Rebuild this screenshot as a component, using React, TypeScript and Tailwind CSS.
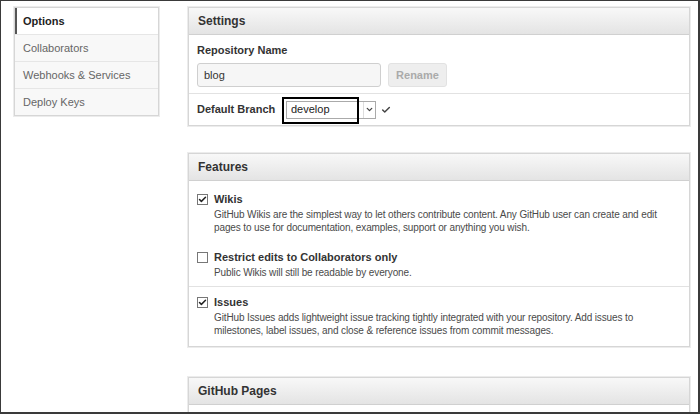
import { Check, ChevronDown } from 'lucide-react';

const navItems = ['Options', 'Collaborators', 'Webhooks & Services', 'Deploy Keys'];

function Panel({ title, children, className }: { title: string; children?: React.ReactNode; className?: string }) {
    return (
        <div className={'border border-[#d6d6d6] shadow-[0_0_0_1px_#ececec] bg-white ' + (className ?? '')}>
            <div className="h-[27px] flex items-center px-[9px] bg-gradient-to-b from-[#f8f8f8] to-[#e4e4e4] border-b border-[#d0d0d0] text-[12px] font-bold text-[#333]">
                {title}
            </div>
            {children}
        </div>
    );
}

function Box({ checked }: { checked?: boolean }) {
    return (
        <span className="w-[11px] h-[11px] border border-[#777] bg-white flex items-center justify-center shrink-0">
            {checked && <Check className="w-[9px] h-[9px] text-[#222]" strokeWidth={4} />}
        </span>
    );
}

function Feature({ title, checked, lines }: { title: string; checked?: boolean; lines: string[] }) {
    return (
        <div>
            <div className="flex items-center gap-[6px] h-[13px]">
                <Box checked={checked} />
                <span className="text-[11px] font-bold text-[#333]">{title}</span>
            </div>
            <div className="pl-[17px] mt-[2px] text-[10px] leading-[13px] tracking-[-0.12px] text-[#4a4a4a] whitespace-nowrap">
                {lines.map(l => <div key={l}>{l}</div>)}
            </div>
        </div>
    );
}

export default function App() {
    return (
        <div className="w-[700px] h-[414px] overflow-hidden bg-white border-l border-t border-r-2 border-b-2 border-[#3a3a3a] font-['Liberation_Sans',Arial,sans-serif]">
            <div className="flex pt-[6px] pl-[13px] gap-[29px]">
                {/* Sidebar */}
                <div className="w-[145px] self-start border border-[#d6d6d6] shadow-[0_0_0_1px_#ececec] bg-white">
                    {navItems.map((item, i) => (
                        <div
                            key={item}
                            className={
                                i === 0
                                    ? 'h-[26px] flex items-center pl-[6px] border-l-2 border-[#555] bg-white text-[11px] font-bold text-[#222]'
                                    : 'h-[27px] flex items-center pl-[8px] border-t border-[#e6e6e6] bg-[#f8f8f8] text-[11px] text-[#666]'
                            }
                        >
                            {item}
                        </div>
                    ))}
                </div>

                {/* Main column */}
                <div className="w-[502px] flex flex-col gap-[27px]">
                    <Panel title="Settings">
                        <div className="px-[8px] pt-[9px] pb-[6px] border-b border-[#e2e2e2]">
                            <div className="text-[11px] font-bold text-[#333] leading-[13px]">Repository Name</div>
                            <div className="flex gap-[7px] mt-[6px]">
                                <div className="w-[184px] h-[24px] border border-[#cfcfcf] rounded-[3px] bg-[#f6f6f6] flex items-center px-[6px] text-[11px] text-[#333]">
                                    blog
                                </div>
                                <div className="w-[59px] h-[24px] rounded-[3px] bg-[#eeeeee] border border-[#e2e2e2] flex items-center justify-center text-[11px] font-bold text-[#aaa]">
                                    Rename
                                </div>
                            </div>
                        </div>
                        <div className="h-[31px] flex items-center px-[8px]">
                            <span className="w-[89px] text-[11px] font-bold text-[#333]">Default Branch</span>
                            <div className="relative flex items-center">
                                <div className="w-[90px] h-[18px] border border-[#aaa] bg-white flex items-center pl-[4px] text-[11px] text-[#222]">
                                    <span className="flex-1">develop</span>
                                    <span className="w-[12px] h-[16px] flex items-center justify-center border-l border-[#ddd]">
                                        <ChevronDown className="w-[9px] h-[9px] text-[#444]" strokeWidth={3.5} />
                                    </span>
                                </div>
                                <Check className="ml-[5px] w-[10px] h-[10px] text-[#444]" strokeWidth={3.5} />
                                <div className="absolute left-[-4px] top-[-4px] w-[77px] h-[27px] border-2 border-black" />
                            </div>
                        </div>
                    </Panel>

                    <Panel title="Features">
                        <div className="px-[8px] pt-[12px] pb-[7px] border-b border-[#e2e2e2] flex flex-col gap-[17px]">
                            <Feature
                                title="Wikis"
                                checked
                                lines={[
                                    'GitHub Wikis are the simplest way to let others contribute content. Any GitHub user can create and edit',
                                    'pages to use for documentation, examples, support or anything you wish.',
                                ]}
                            />
                            <Feature
                                title="Restrict edits to Collaborators only"
                                lines={['Public Wikis will still be readable by everyone.']}
                            />
                        </div>
                        <div className="px-[8px] pt-[9px] pb-[9px]">
                            <Feature
                                title="Issues"
                                checked
                                lines={[
                                    'GitHub Issues adds lightweight issue tracking tightly integrated with your repository. Add issues to',
                                    'milestones, label issues, and close & reference issues from commit messages.',
                                ]}
                            />
                        </div>
                    </Panel>

                    <Panel title="GitHub Pages" className="mt-[3px]">
                        <div className="h-[40px]" />
                    </Panel>
                </div>
            </div>
        </div>
    );
}
